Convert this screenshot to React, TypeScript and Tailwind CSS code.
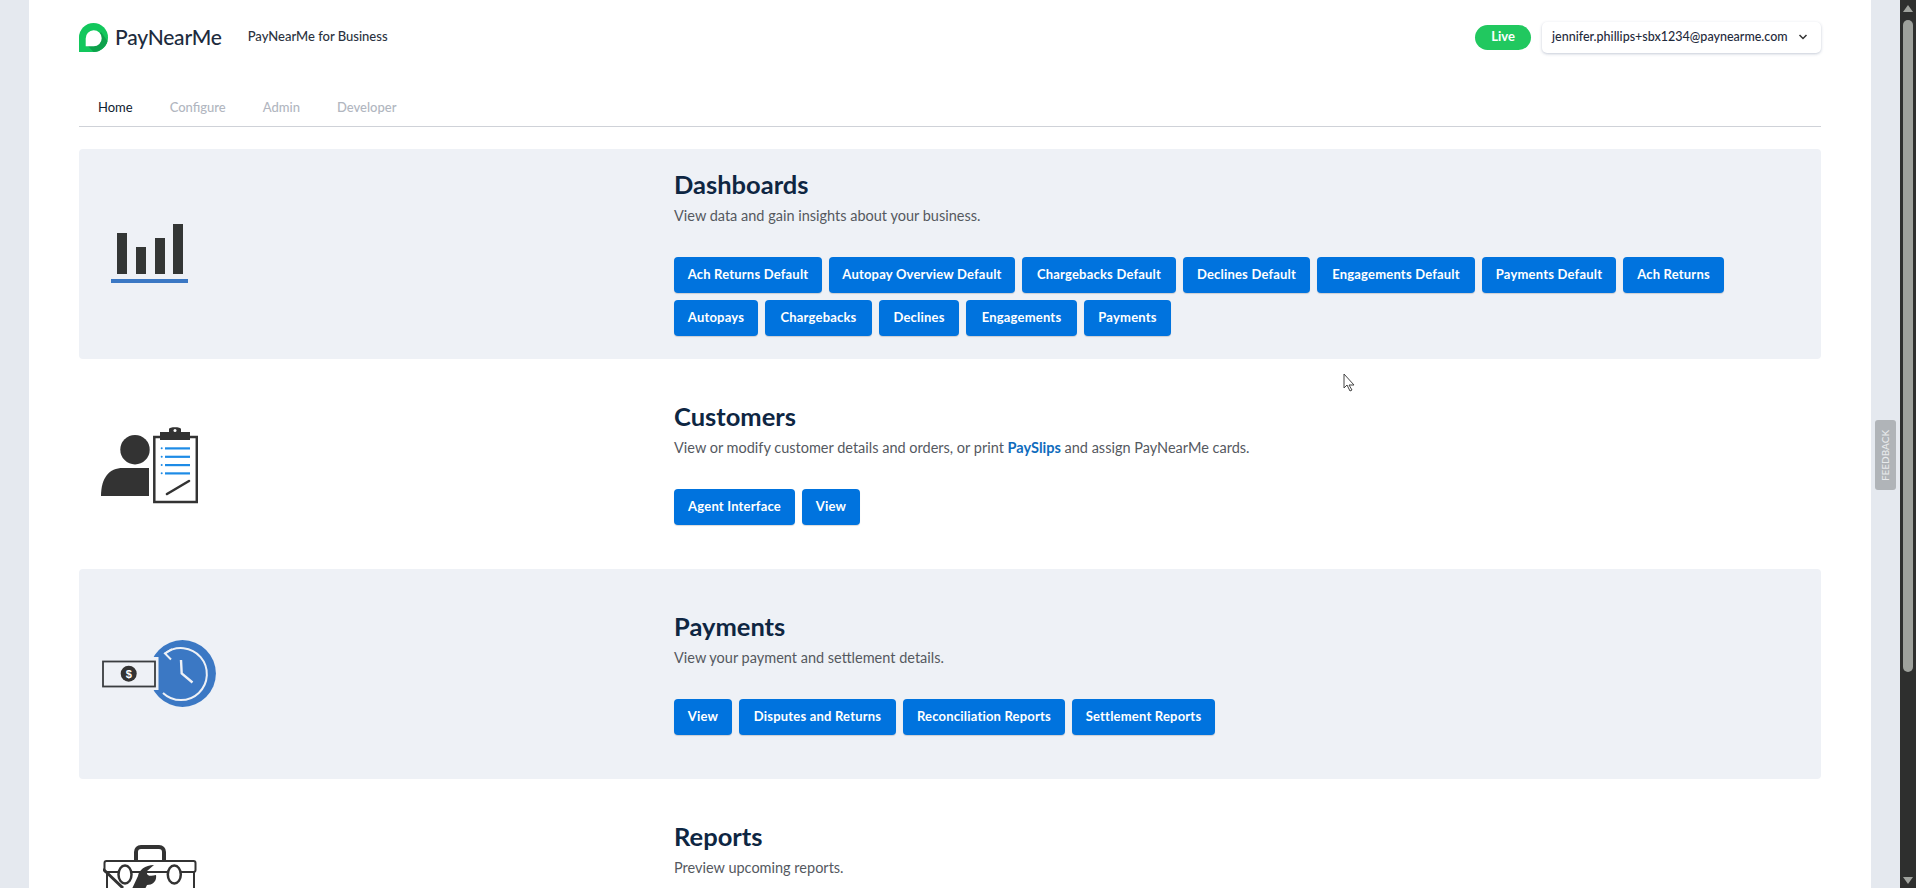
import React from "react";

const font = "font-['Lato','Open_Sans',sans-serif]";

type BtnDef = { label: string; w: string };

const Btn = ({ label, w }: BtnDef) => (
  <button className={`h-9 rounded-[4px] bg-[#0073de] text-[13px] font-bold tracking-[0.2px] whitespace-nowrap text-white shadow-[0_1px_1px_rgba(0,0,0,0.15)] ${w}`}>
    {label}
  </button>
);

const ChartIcon = () => (
  <svg width="77" height="59" viewBox="0 0 77 59">
    <rect x="6" y="9" width="10" height="41" fill="#333635" />
    <rect x="25" y="23" width="10" height="27" fill="#333635" />
    <rect x="44" y="14" width="10" height="36" fill="#333635" />
    <rect x="62" y="0" width="10" height="50" fill="#333635" />
    <rect x="0" y="55" width="77" height="4" fill="#3b78c4" />
  </svg>
);

const CustomerIcon = () => (
  <svg width="97" height="77" viewBox="0 0 97 77">
    <circle cx="34" cy="22.700" r="14.700" fill="#333" />
    <path d="M0 69c0-18 8-28 22-28h26v28z" fill="#333" />
    <rect x="53.300" y="10" width="42.500" height="65" fill="#fff" stroke="#333" strokeWidth="2.500" />
    <path d="M59 13V5h9V2c0-2.500 12-2.500 12 0v3h9v8z" fill="#333" />
    <circle cx="74" cy="3.500" r="1.500" fill="#fff" />
    {[21.3, 29.7, 38, 46.3].map((y) => (
      <g key={y}>
        <circle cx="60.700" cy={y} r="1" fill="#1d8be6" />
        <rect x="64" y={y - 1} width="25" height="2.200" fill="#1d8be6" />
      </g>
    ))}
    <path d="M66 67l22-13" stroke="#333" strokeWidth="2.600" strokeLinecap="round" />
  </svg>
);

const PaymentIcon = () => (
  <svg width="114" height="67" viewBox="0 0 114 67">
    <circle cx="80.500" cy="33.500" r="33.400" fill="#3b78c4" />
    <rect x="0" y="17" width="56.500" height="33" fill="#eef1f6" />
    <rect x="1" y="21.500" width="52" height="25" fill="#eef1f6" stroke="#3a3d40" strokeWidth="1.800" />
    <circle cx="26.700" cy="33.700" r="8" fill="#333" />
    <text x="26.700" y="37.700" textAnchor="middle" fontSize="11" fontWeight="700" fill="#fff" fontFamily="Liberation Sans">$</text>
    <path d="M63 13.500A26 26 0 1 1 61 53" fill="none" stroke="#eef1f6" strokeWidth="2" />
    <path d="M70 9l-7 4.500 6 6" fill="none" stroke="#eef1f6" strokeWidth="2" />
    <path d="M79 20l.7 13.500 10.800 9" fill="none" stroke="#eef1f6" strokeWidth="2.400" />
  </svg>
);

const ToolboxIcon = () => (
  <svg width="94" height="62" viewBox="0 0 94 62">
    <path d="M33 15V7c0-3 2-5 5-5h18c3 0 5 2 5 5v8" fill="none" stroke="#333" strokeWidth="4" />
    <rect x="1.500" y="16" width="91" height="11" rx="2" fill="none" stroke="#333" strokeWidth="2" />
    <path d="M4 27v35M91 27v35" stroke="#333" strokeWidth="2" />
    <path d="M0 24l20 19" stroke="#333" strokeWidth="3" />
    <ellipse cx="22" cy="29.500" rx="6.500" ry="9" fill="#fff" stroke="#333" strokeWidth="2.500" />
    <ellipse cx="71.300" cy="29.500" rx="6.500" ry="9" fill="#fff" stroke="#333" strokeWidth="2.500" />
    <path d="M28 46L35 31C36 25 42 20 51 20L44 26C43 30 46 32 53 30C54 36 50 40 44 40L40 48H28z" fill="#333" />
  </svg>
);

const Logo = () => (
  <svg width="29" height="29" viewBox="0 0 29 29">
    <path d="M0 29V14.500A14.500 14.500 0 1 1 14.500 29z" fill="#12c75c" />
    <path d="M9 23l13-14 6.500 9C27 24 21 29 14.500 29z" fill="#0da14b" />
    <path d="M6.700 23.300V15.500A8 8 0 1 1 14.700 23.300z" fill="#fff" />
  </svg>
);

const Section = ({
  shaded,
  icon,
  iconPos,
  bodyPos,
  title,
  children,
  rows,
}: {
  shaded?: boolean;
  icon: React.ReactNode;
  iconPos: string;
  bodyPos: string;
  title: string;
  children: React.ReactNode;
  rows: BtnDef[][];
}) => (
  <section className={`flex h-[210px] shrink-0 rounded-[4px] ${shaded ? "bg-[#eef1f6]" : "bg-white"}`}>
    <div className={`w-[595px] shrink-0 ${iconPos}`}>{icon}</div>
    <div className={bodyPos}>
      <h2 className="text-[25.500px] leading-[31px] font-bold text-[#0e2642]">{title}</h2>
      <p className="mt-[6px] text-[14.500px] leading-[20px] text-[#55595f]">{children}</p>
      <div className="mt-[31px] flex flex-col gap-[7px]">
        {rows.map((r, i) => (
          <div key={i} className="flex gap-[7px]">
            {r.map((b) => (
              <Btn key={b.label} {...b} />
            ))}
          </div>
        ))}
      </div>
    </div>
  </section>
);

export default function App() {
  return (
    <div className={`flex h-[888px] w-[1916px] overflow-hidden bg-[#e5e9ef] ${font}`}>
      <div className="w-[29px] shrink-0" />
      <main className="relative flex h-full w-[1842px] shrink-0 flex-col overflow-hidden bg-white px-[50px]">
        <header className="flex h-[74px] shrink-0 items-center justify-between">
          <div className="flex items-center">
            <Logo />
            <span className="ml-[7px] text-[21px] font-medium tracking-[-0.2px] text-[#202b3d]">PayNearMe</span>
            <span className="ml-[26px] text-[13px] font-medium text-[#2b3240]">PayNearMe for Business</span>
          </div>
          <div className="flex items-center gap-[11px]">
            <span className="flex h-[25px] w-[56px] items-center justify-center rounded-full bg-[#21c85f] text-[13px] font-bold text-white">Live</span>
            <button className="flex h-[31px] w-[279px] items-center justify-between rounded-[5px] bg-white pr-[13px] pl-[10px] text-[12.500px] font-medium text-[#1f2a3c] shadow-[0_1px_3px_rgba(60,80,120,0.3)]">
              jennifer.phillips+sbx1234@paynearme.com
              <svg width="10" height="6" viewBox="0 0 10 6" fill="none" stroke="#333" strokeWidth="1.500"><path d="M1.500 1l3.500 3.500L8.500 1" /></svg>
            </button>
          </div>
        </header>
        <nav className="flex h-[53px] shrink-0 items-end gap-[37px] border-b border-[#cfd2d8] pb-[9px] pl-[19px] text-[13px]">
          <span className="text-[#0e2030]">Home</span>
          <span className="font-medium text-[#b1b6c0]">Configure</span>
          <span className="font-medium text-[#b1b6c0]">Admin</span>
          <span className="font-medium text-[#b1b6c0]">Developer</span>
        </nav>
        <div className="mt-[22px] flex flex-col">
          <Section
            shaded
            icon={<ChartIcon />}
            iconPos="pt-[75px] pl-[32px]"
            bodyPos="pt-[20px]"
            title="Dashboards"
            rows={[
              [
                { label: "Ach Returns Default", w: "w-[148px]" },
                { label: "Autopay Overview Default", w: "w-[186px]" },
                { label: "Chargebacks Default", w: "w-[154px]" },
                { label: "Declines Default", w: "w-[127px]" },
                { label: "Engagements Default", w: "w-[158px]" },
                { label: "Payments Default", w: "w-[134px]" },
                { label: "Ach Returns", w: "w-[101px]" },
              ],
              [
                { label: "Autopays", w: "w-[84px]" },
                { label: "Chargebacks", w: "w-[107px]" },
                { label: "Declines", w: "w-[80px]" },
                { label: "Engagements", w: "w-[111px]" },
                { label: "Payments", w: "w-[87px]" },
              ],
            ]}
          >
            View data and gain insights about your business.
          </Section>
          <Section
            icon={<CustomerIcon />}
            iconPos="pt-[68px] pl-[22px]"
            bodyPos="pt-[42px]"
            title="Customers"
            rows={[
              [
                { label: "Agent Interface", w: "w-[121px]" },
                { label: "View", w: "w-[58px]" },
              ],
            ]}
          >
            View or modify customer details and orders, or print <a className="font-bold text-[#0f6cbd]">PaySlips</a> and assign PayNearMe cards.
          </Section>
          <Section
            shaded
            icon={<PaymentIcon />}
            iconPos="pt-[71px] pl-[23px]"
            bodyPos="pt-[42px]"
            title="Payments"
            rows={[
              [
                { label: "View", w: "w-[58px]" },
                { label: "Disputes and Returns", w: "w-[157px]" },
                { label: "Reconciliation Reports", w: "w-[162px]" },
                { label: "Settlement Reports", w: "w-[143px]" },
              ],
            ]}
          >
            View your payment and settlement details.
          </Section>
          <Section
            icon={<ToolboxIcon />}
            iconPos="pt-[66px] pl-[24px]"
            bodyPos="pt-[42px]"
            title="Reports"
            rows={[]}
          >
            Preview upcoming reports.
          </Section>
        </div>
        {/* mouse pointer caught in the capture */}
        <svg className="absolute top-[373px] left-[1314px]" width="14" height="20" viewBox="0 0 14 20">
          <path d="M1 1v14l3-3 3 6 2-1-3-5h5z" fill="#fff" stroke="#444" strokeWidth="1" />
        </svg>
      </main>
      <div className="flex w-[29px] shrink-0 items-start pt-[420px] pl-[4px]">
        <div className="flex h-[70px] w-[21px] items-center justify-center rounded-[3px] bg-[#b0b4b8]">
          <span className="-rotate-90 text-[10px] font-medium whitespace-nowrap text-[#e8eaec]">FEEDBACK</span>
        </div>
      </div>
      <div className="flex w-[16px] shrink-0 flex-col items-center bg-[#2e2f2e] pt-[5px] pb-[4px]">
        <div className="h-0 w-0 border-x-[5px] border-b-[7px] border-x-transparent border-b-[#a0a39e]" />
        <div className="mt-[8px] h-[652px] w-[10px] rounded-full bg-[#9ea19c]" />
        <div className="mt-auto h-0 w-0 border-x-[5px] border-t-[7px] border-x-transparent border-t-[#a0a39e]" />
      </div>
    </div>
  );
}
